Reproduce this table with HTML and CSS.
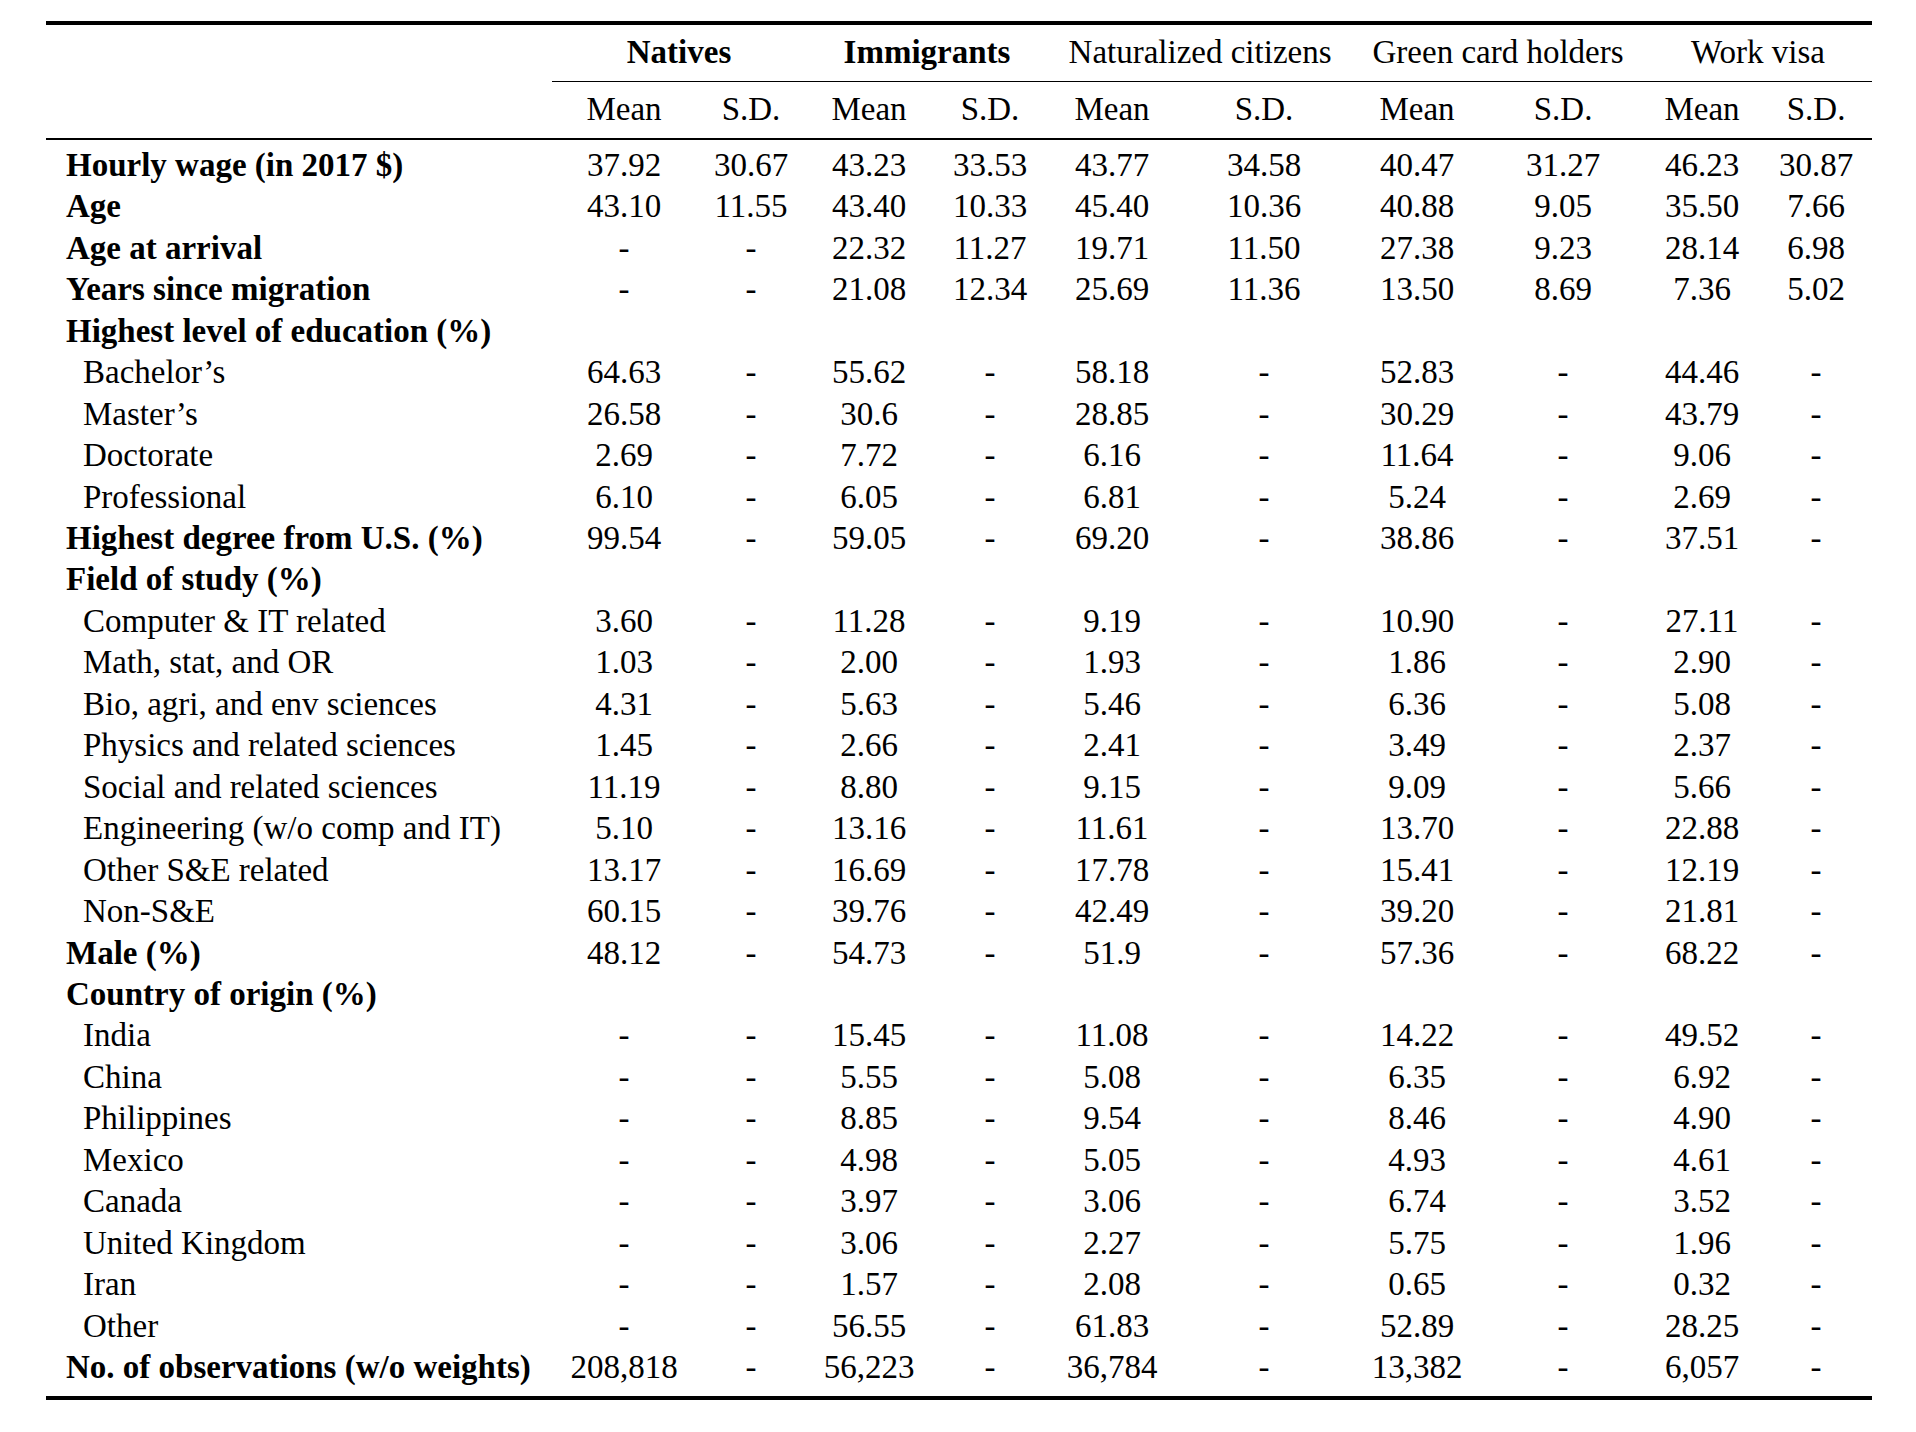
FILE: index.html
```html
<!DOCTYPE html>
<html>
<head>
<meta charset="utf-8">
<link rel="stylesheet" href="styles.css">
</head>
<body>
<table class="stats">
<colgroup>
<col class="c-label"><col class="c1"><col class="c2"><col class="c3"><col class="c4"><col class="c5"><col class="c6"><col class="c7"><col class="c8"><col class="c9"><col class="c10">
</colgroup>
<thead>
<tr class="groups">
<th class="blank"></th>
<th colspan="2" class="b">Natives</th>
<th colspan="2" class="b">Immigrants</th>
<th colspan="2">Naturalized citizens</th>
<th colspan="2">Green card holders</th>
<th colspan="2">Work visa</th>
</tr>
<tr class="sub">
<th></th>
<th>Mean</th><th>S.D.</th>
<th>Mean</th><th>S.D.</th>
<th>Mean</th><th>S.D.</th>
<th>Mean</th><th>S.D.</th>
<th>Mean</th><th>S.D.</th>
</tr>
</thead>
<tbody>
<tr class="first"><td class="lab b">Hourly wage (in 2017 $)</td><td>37.92</td><td>30.67</td><td>43.23</td><td>33.53</td><td>43.77</td><td>34.58</td><td>40.47</td><td>31.27</td><td>46.23</td><td>30.87</td></tr>
<tr><td class="lab b">Age</td><td>43.10</td><td>11.55</td><td>43.40</td><td>10.33</td><td>45.40</td><td>10.36</td><td>40.88</td><td>9.05</td><td>35.50</td><td>7.66</td></tr>
<tr><td class="lab b">Age at arrival</td><td>-</td><td>-</td><td>22.32</td><td>11.27</td><td>19.71</td><td>11.50</td><td>27.38</td><td>9.23</td><td>28.14</td><td>6.98</td></tr>
<tr><td class="lab b">Years since migration</td><td>-</td><td>-</td><td>21.08</td><td>12.34</td><td>25.69</td><td>11.36</td><td>13.50</td><td>8.69</td><td>7.36</td><td>5.02</td></tr>
<tr><td class="lab b">Highest level of education (%)</td><td></td><td></td><td></td><td></td><td></td><td></td><td></td><td></td><td></td><td></td></tr>
<tr><td class="lab ind">Bachelor’s</td><td>64.63</td><td>-</td><td>55.62</td><td>-</td><td>58.18</td><td>-</td><td>52.83</td><td>-</td><td>44.46</td><td>-</td></tr>
<tr><td class="lab ind">Master’s</td><td>26.58</td><td>-</td><td>30.6</td><td>-</td><td>28.85</td><td>-</td><td>30.29</td><td>-</td><td>43.79</td><td>-</td></tr>
<tr><td class="lab ind">Doctorate</td><td>2.69</td><td>-</td><td>7.72</td><td>-</td><td>6.16</td><td>-</td><td>11.64</td><td>-</td><td>9.06</td><td>-</td></tr>
<tr><td class="lab ind">Professional</td><td>6.10</td><td>-</td><td>6.05</td><td>-</td><td>6.81</td><td>-</td><td>5.24</td><td>-</td><td>2.69</td><td>-</td></tr>
<tr><td class="lab b">Highest degree from U.S. (%)</td><td>99.54</td><td>-</td><td>59.05</td><td>-</td><td>69.20</td><td>-</td><td>38.86</td><td>-</td><td>37.51</td><td>-</td></tr>
<tr><td class="lab b">Field of study (%)</td><td></td><td></td><td></td><td></td><td></td><td></td><td></td><td></td><td></td><td></td></tr>
<tr><td class="lab ind">Computer &amp; IT related</td><td>3.60</td><td>-</td><td>11.28</td><td>-</td><td>9.19</td><td>-</td><td>10.90</td><td>-</td><td>27.11</td><td>-</td></tr>
<tr><td class="lab ind">Math, stat, and OR</td><td>1.03</td><td>-</td><td>2.00</td><td>-</td><td>1.93</td><td>-</td><td>1.86</td><td>-</td><td>2.90</td><td>-</td></tr>
<tr><td class="lab ind">Bio, agri, and env sciences</td><td>4.31</td><td>-</td><td>5.63</td><td>-</td><td>5.46</td><td>-</td><td>6.36</td><td>-</td><td>5.08</td><td>-</td></tr>
<tr><td class="lab ind">Physics and related sciences</td><td>1.45</td><td>-</td><td>2.66</td><td>-</td><td>2.41</td><td>-</td><td>3.49</td><td>-</td><td>2.37</td><td>-</td></tr>
<tr><td class="lab ind">Social and related sciences</td><td>11.19</td><td>-</td><td>8.80</td><td>-</td><td>9.15</td><td>-</td><td>9.09</td><td>-</td><td>5.66</td><td>-</td></tr>
<tr><td class="lab ind">Engineering (w/o comp and IT)</td><td>5.10</td><td>-</td><td>13.16</td><td>-</td><td>11.61</td><td>-</td><td>13.70</td><td>-</td><td>22.88</td><td>-</td></tr>
<tr><td class="lab ind">Other S&amp;E related</td><td>13.17</td><td>-</td><td>16.69</td><td>-</td><td>17.78</td><td>-</td><td>15.41</td><td>-</td><td>12.19</td><td>-</td></tr>
<tr><td class="lab ind">Non-S&amp;E</td><td>60.15</td><td>-</td><td>39.76</td><td>-</td><td>42.49</td><td>-</td><td>39.20</td><td>-</td><td>21.81</td><td>-</td></tr>
<tr><td class="lab b">Male (%)</td><td>48.12</td><td>-</td><td>54.73</td><td>-</td><td>51.9</td><td>-</td><td>57.36</td><td>-</td><td>68.22</td><td>-</td></tr>
<tr><td class="lab b">Country of origin (%)</td><td></td><td></td><td></td><td></td><td></td><td></td><td></td><td></td><td></td><td></td></tr>
<tr><td class="lab ind">India</td><td>-</td><td>-</td><td>15.45</td><td>-</td><td>11.08</td><td>-</td><td>14.22</td><td>-</td><td>49.52</td><td>-</td></tr>
<tr><td class="lab ind">China</td><td>-</td><td>-</td><td>5.55</td><td>-</td><td>5.08</td><td>-</td><td>6.35</td><td>-</td><td>6.92</td><td>-</td></tr>
<tr><td class="lab ind">Philippines</td><td>-</td><td>-</td><td>8.85</td><td>-</td><td>9.54</td><td>-</td><td>8.46</td><td>-</td><td>4.90</td><td>-</td></tr>
<tr><td class="lab ind">Mexico</td><td>-</td><td>-</td><td>4.98</td><td>-</td><td>5.05</td><td>-</td><td>4.93</td><td>-</td><td>4.61</td><td>-</td></tr>
<tr><td class="lab ind">Canada</td><td>-</td><td>-</td><td>3.97</td><td>-</td><td>3.06</td><td>-</td><td>6.74</td><td>-</td><td>3.52</td><td>-</td></tr>
<tr><td class="lab ind">United Kingdom</td><td>-</td><td>-</td><td>3.06</td><td>-</td><td>2.27</td><td>-</td><td>5.75</td><td>-</td><td>1.96</td><td>-</td></tr>
<tr><td class="lab ind">Iran</td><td>-</td><td>-</td><td>1.57</td><td>-</td><td>2.08</td><td>-</td><td>0.65</td><td>-</td><td>0.32</td><td>-</td></tr>
<tr><td class="lab ind">Other</td><td>-</td><td>-</td><td>56.55</td><td>-</td><td>61.83</td><td>-</td><td>52.89</td><td>-</td><td>28.25</td><td>-</td></tr>
<tr class="last"><td class="lab b">No. of observations (w/o weights)</td><td>208,818</td><td>-</td><td>56,223</td><td>-</td><td>36,784</td><td>-</td><td>13,382</td><td>-</td><td>6,057</td><td>-</td></tr>
</tbody>
</table>
</body>
</html>
```
FILE: styles.css
```css
html, body {
  margin: 0;
  padding: 0;
  background: #ffffff;
}

body {
  font-family: "Liberation Serif", "Times New Roman", serif;
  font-size: 33px;
  color: #000000;
}

.stats {
  margin: 21px 0 0 46px;
  width: 1826px;
  table-layout: fixed;
  border-collapse: separate;
  border-spacing: 0;
}

.c-label { width: 506px; }
.c1 { width: 144px; }
.c2 { width: 110px; }
.c3 { width: 126px; }
.c4 { width: 116px; }
.c5 { width: 128px; }
.c6 { width: 176px; }
.c7 { width: 130px; }
.c8 { width: 162px; }
.c9 { width: 116px; }
.c10 { width: 112px; }

.stats th,
.stats td {
  padding: 0;
  line-height: 41.45px;
  text-align: center;
  font-weight: normal;
  white-space: nowrap;
  vertical-align: top;
}

.stats .b { font-weight: bold; }

.groups th {
  border-top: 4px solid #000;
  border-bottom: 1px solid #000;
  padding-top: 7px;
  padding-bottom: 7.5px;
}

.groups th.blank {
  border-bottom-color: transparent;
}

.sub th {
  padding-top: 7px;
  padding-bottom: 7.5px;
  border-bottom: 2px solid #000;
}

.first td { padding-top: 5px; }

.last td {
  padding-bottom: 7.5px;
  border-bottom: 4px solid #000;
}

.stats td.lab {
  text-align: left;
  padding-left: 20px;
}

.stats td.ind {
  padding-left: 37px;
}
```
